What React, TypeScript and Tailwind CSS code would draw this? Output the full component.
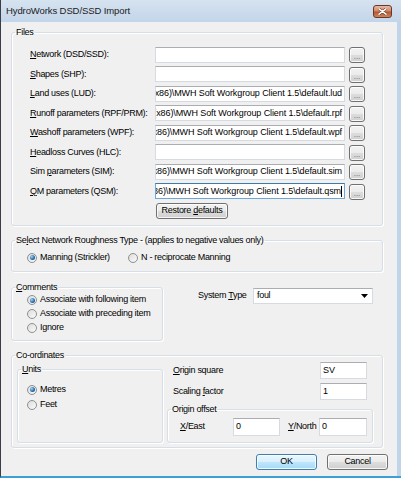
import React from "react";

const base = "(x86)\\MWH Soft Workgroup Client 1.5\\";

const fileRows = [
  { pre: "", key: "N", post: "etwork (DSD/SSD):", value: "" },
  { pre: "", key: "S", post: "hapes (SHP):", value: "" },
  { pre: "", key: "L", post: "and uses (LUD):", value: base + "default.lud" },
  { pre: "", key: "R", post: "unoff parameters (RPF/PRM):", value: base + "default.rpf" },
  { pre: "", key: "W", post: "ashoff parameters (WPF):", value: base + "default.wpf" },
  { pre: "", key: "H", post: "eadloss Curves (HLC):", value: "" },
  { pre: "Sim ", key: "p", post: "arameters (SIM):", value: base + "default.sim" },
  { pre: "", key: "Q", post: "M parameters (QSM):", value: base + "default.qsm", focused: true },
];

function Mn({ pre = "", k, post = "" }: { pre?: string; k: string; post?: string }) {
  return (
    <span className="whitespace-nowrap">
      {pre}
      <span className="underline underline-offset-[1px]">{k}</span>
      {post}
    </span>
  );
}

function Radio({ checked, children }: { checked?: boolean; children: React.ReactNode }) {
  return (
    <div className="flex items-center gap-[3px]">
      <span className="w-[10px] h-[10px] rounded-full border border-[#8d8f91] bg-[linear-gradient(135deg,#dcdcdc,#fbfbfb)] flex items-center justify-center shrink-0">
        {checked && (
          <span className="w-[5px] h-[5px] rounded-full bg-[radial-gradient(circle_at_35%_35%,#9ad8fa,#2367a8_60%,#173f6e)]" />
        )}
      </span>
      <span className="whitespace-nowrap">{children}</span>
    </div>
  );
}

function TextBox({
  value,
  className = "",
  focused,
  align = "end",
}: {
  value: string;
  className?: string;
  focused?: boolean;
  align?: "start" | "end";
}) {
  return (
    <div
      className={`bg-white border flex items-center overflow-hidden px-[2px] ${
        focused ? "border-[#6ea6d4] border-t-[#3d7bad]" : "border-[#d6dbe2] border-t-[#abadb3]"
      } ${align === "end" ? "justify-end" : "justify-start"} ${className}`}
    >
      <span className="whitespace-nowrap shrink-0 tracking-[-0.1px]">{value}</span>
      {focused && <span className="w-[1px] h-[11px] bg-black shrink-0" />}
    </div>
  );
}

function Btn({ children, className = "", primary }: { children: React.ReactNode; className?: string; primary?: boolean }) {
  return (
    <div
      className={`flex items-center justify-center rounded-[3px] border shadow-[inset_0_0_0_1px_rgba(255,255,255,0.8)] ${
        primary
          ? "border-[#3c7fb1] bg-[linear-gradient(#eaf6fd_0%,#d9f0fc_50%,#bee6fd_51%,#a7d9f5_100%)]"
          : "border-[#707070] bg-[linear-gradient(#f2f2f2_0%,#ebebeb_50%,#dddddd_51%,#cfcfcf_100%)]"
      } ${className}`}
    >
      {children}
    </div>
  );
}

function Group({ title, className = "", children }: { title: React.ReactNode; className?: string; children: React.ReactNode }) {
  return (
    <fieldset
      className={`border border-[#d5dfe5] rounded-[3px] shadow-[inset_1px_1px_0_#fff,1px_1px_0_#fff] ${className}`}
    >
      <legend className="ml-[3px] px-[1px] leading-[12px]">{title}</legend>
      {children}
    </fieldset>
  );
}

export default function App() {
  return (
    <div className="w-[401px] h-[478px] overflow-hidden flex flex-col bg-[#c1d4e9] border-l border-l-[#3b3d48] border-b-2 border-b-[#3d9fd6] font-['Liberation_Sans',Arial,sans-serif] text-black">
      {/* title bar */}
      <div className="h-[22px] shrink-0 flex items-center justify-between pl-[5px] pr-[9px] bg-[linear-gradient(#d6e3f0,#c3d5e9)]">
        <span className="text-[9.5px] tracking-[-0.1px] text-[#1b1b1b]">HydroWorks DSD/SSD Import</span>
        <div className="w-[19px] h-[13px] rounded-[3px] border border-[#6b3826] bg-[linear-gradient(#e9bba3_0%,#cf8565_48%,#b5532f_52%,#cc8460_100%)] flex items-center justify-center">
          <svg width="9" height="7" viewBox="0 0 9 7">
            <path d="M1 0.8 L8 6.2 M8 0.8 L1 6.2" stroke="#5a2a1a" strokeWidth="2.6" strokeLinecap="round" />
            <path d="M1 0.8 L8 6.2 M8 0.8 L1 6.2" stroke="#ffffff" strokeWidth="1.6" strokeLinecap="round" />
          </svg>
        </div>
      </div>

      {/* client area */}
      <div className="flex-1 mr-[4px] bg-[#f0f0f0] pl-[10px] pr-[9px] pt-[4px] text-[9px] tracking-[-0.3px]">
        <Group title="Files" className="w-[372px]">
          <div className="pt-[7px] pb-[6px] pl-[18px]">
            {fileRows.map((r) => (
              <div key={r.post} className="h-[19.5px] flex items-center">
                <div className="w-[125px]">
                  <Mn pre={r.pre} k={r.key} post={r.post} />
                </div>
                <TextBox value={r.value} focused={r.focused} className="w-[190px] h-[16px]" />
                <Btn className="ml-[4px] mt-[1px] w-[16px] h-[16px]">
                  <span className="text-[8px] leading-[8px] text-[#666] mt-[4px] tracking-normal">...</span>
                </Btn>
              </div>
            ))}
            <Btn className="ml-[126px] mt-[2px] w-[72px] h-[16px]">
              <Mn pre="Restore " k="d" post="efaults" />
            </Btn>
          </div>
        </Group>

        <Group
          title={<Mn pre="Se" k="l" post="ect Network Roughness Type - (applies to negative values only)" />}
          className="w-[372px] mt-[8px]"
        >
          <div className="pt-[4px] pb-[6px] pl-[15px] flex items-center h-[25px]">
            <div className="w-[101px]">
              <Radio checked>Manning (Strickler)</Radio>
            </div>
            <Radio>N - reciprocate Manning</Radio>
          </div>
        </Group>

        <div className="flex mt-[9px]">
          <Group title={<Mn k="C" post="omments" />} className="w-[152px]">
            <div className="pl-[15px] pb-[5px]">
              <div className="h-[14px] flex items-center">
                <Radio checked>Associate with following item</Radio>
              </div>
              <div className="h-[14px] flex items-center">
                <Radio>Associate with preceding item</Radio>
              </div>
              <div className="h-[14px] flex items-center">
                <Radio>Ignore</Radio>
              </div>
            </div>
          </Group>
          <div className="mt-[7px] ml-[35px] flex items-center h-[16px]">
            <div className="w-[55px]">
              <Mn pre="System " k="T" post="ype" />
            </div>
            <div className="w-[120px] h-[16px] bg-white border border-[#d6dbe2] border-t-[#abadb3] flex items-center justify-between pl-[3px] pr-[4px]">
              <span>foul</span>
              <svg width="7" height="4" viewBox="0 0 7 4">
                <path d="M0 0 H7 L3.5 4 Z" fill="#000" />
              </svg>
            </div>
          </div>
        </div>

        <Group title="Co-ordinates" className="w-[372px] mt-[8px]">
          <div className="flex pl-[5px] pb-[4px]">
            <Group title={<Mn k="U" post="nits" />} className="w-[146px] h-[80px] mt-[2px]">
              <div className="pt-[7px] pl-[9px]">
                <div className="h-[15px] flex items-center">
                  <Radio checked>Metres</Radio>
                </div>
                <div className="h-[15px] flex items-center">
                  <Radio>Feet</Radio>
                </div>
              </div>
            </Group>
            <div className="ml-[4px] w-[206px] pt-[1px] flex flex-col">
              <div className="flex items-center h-[17px]">
                <div className="w-[153px] pl-[6px]">
                  <Mn k="O" post="rigin square" />
                </div>
                <TextBox value="SV" align="start" className="w-[47px] h-[17px]" />
              </div>
              <div className="flex items-center h-[17px] mt-[4px]">
                <div className="w-[153px] pl-[6px]">
                  <Mn pre="Scaling " k="f" post="actor" />
                </div>
                <TextBox value="1" align="start" className="w-[47px] h-[17px]" />
              </div>
              <Group title="Origin offset" className="w-[206px] h-[40px] mt-[3px]">
                <div className="flex items-center pt-[3px] pl-[12px] h-[21px]">
                  <div className="w-[53px]">
                    <Mn k="X" post="/East" />
                  </div>
                  <TextBox value="0" align="start" className="w-[47px] h-[18px]" />
                  <div className="ml-[8px] w-[31px]">
                    <Mn k="Y" post="/North" />
                  </div>
                  <TextBox value="0" align="start" className="w-[48px] h-[18px]" />
                </div>
              </Group>
            </div>
          </div>
        </Group>

        <div className="flex justify-end gap-[10px] mt-[6px]">
          <Btn primary className="w-[61px] h-[16px]">
            OK
          </Btn>
          <Btn className="w-[61px] h-[16px]">Cancel</Btn>
        </div>
      </div>
    </div>
  );
}
